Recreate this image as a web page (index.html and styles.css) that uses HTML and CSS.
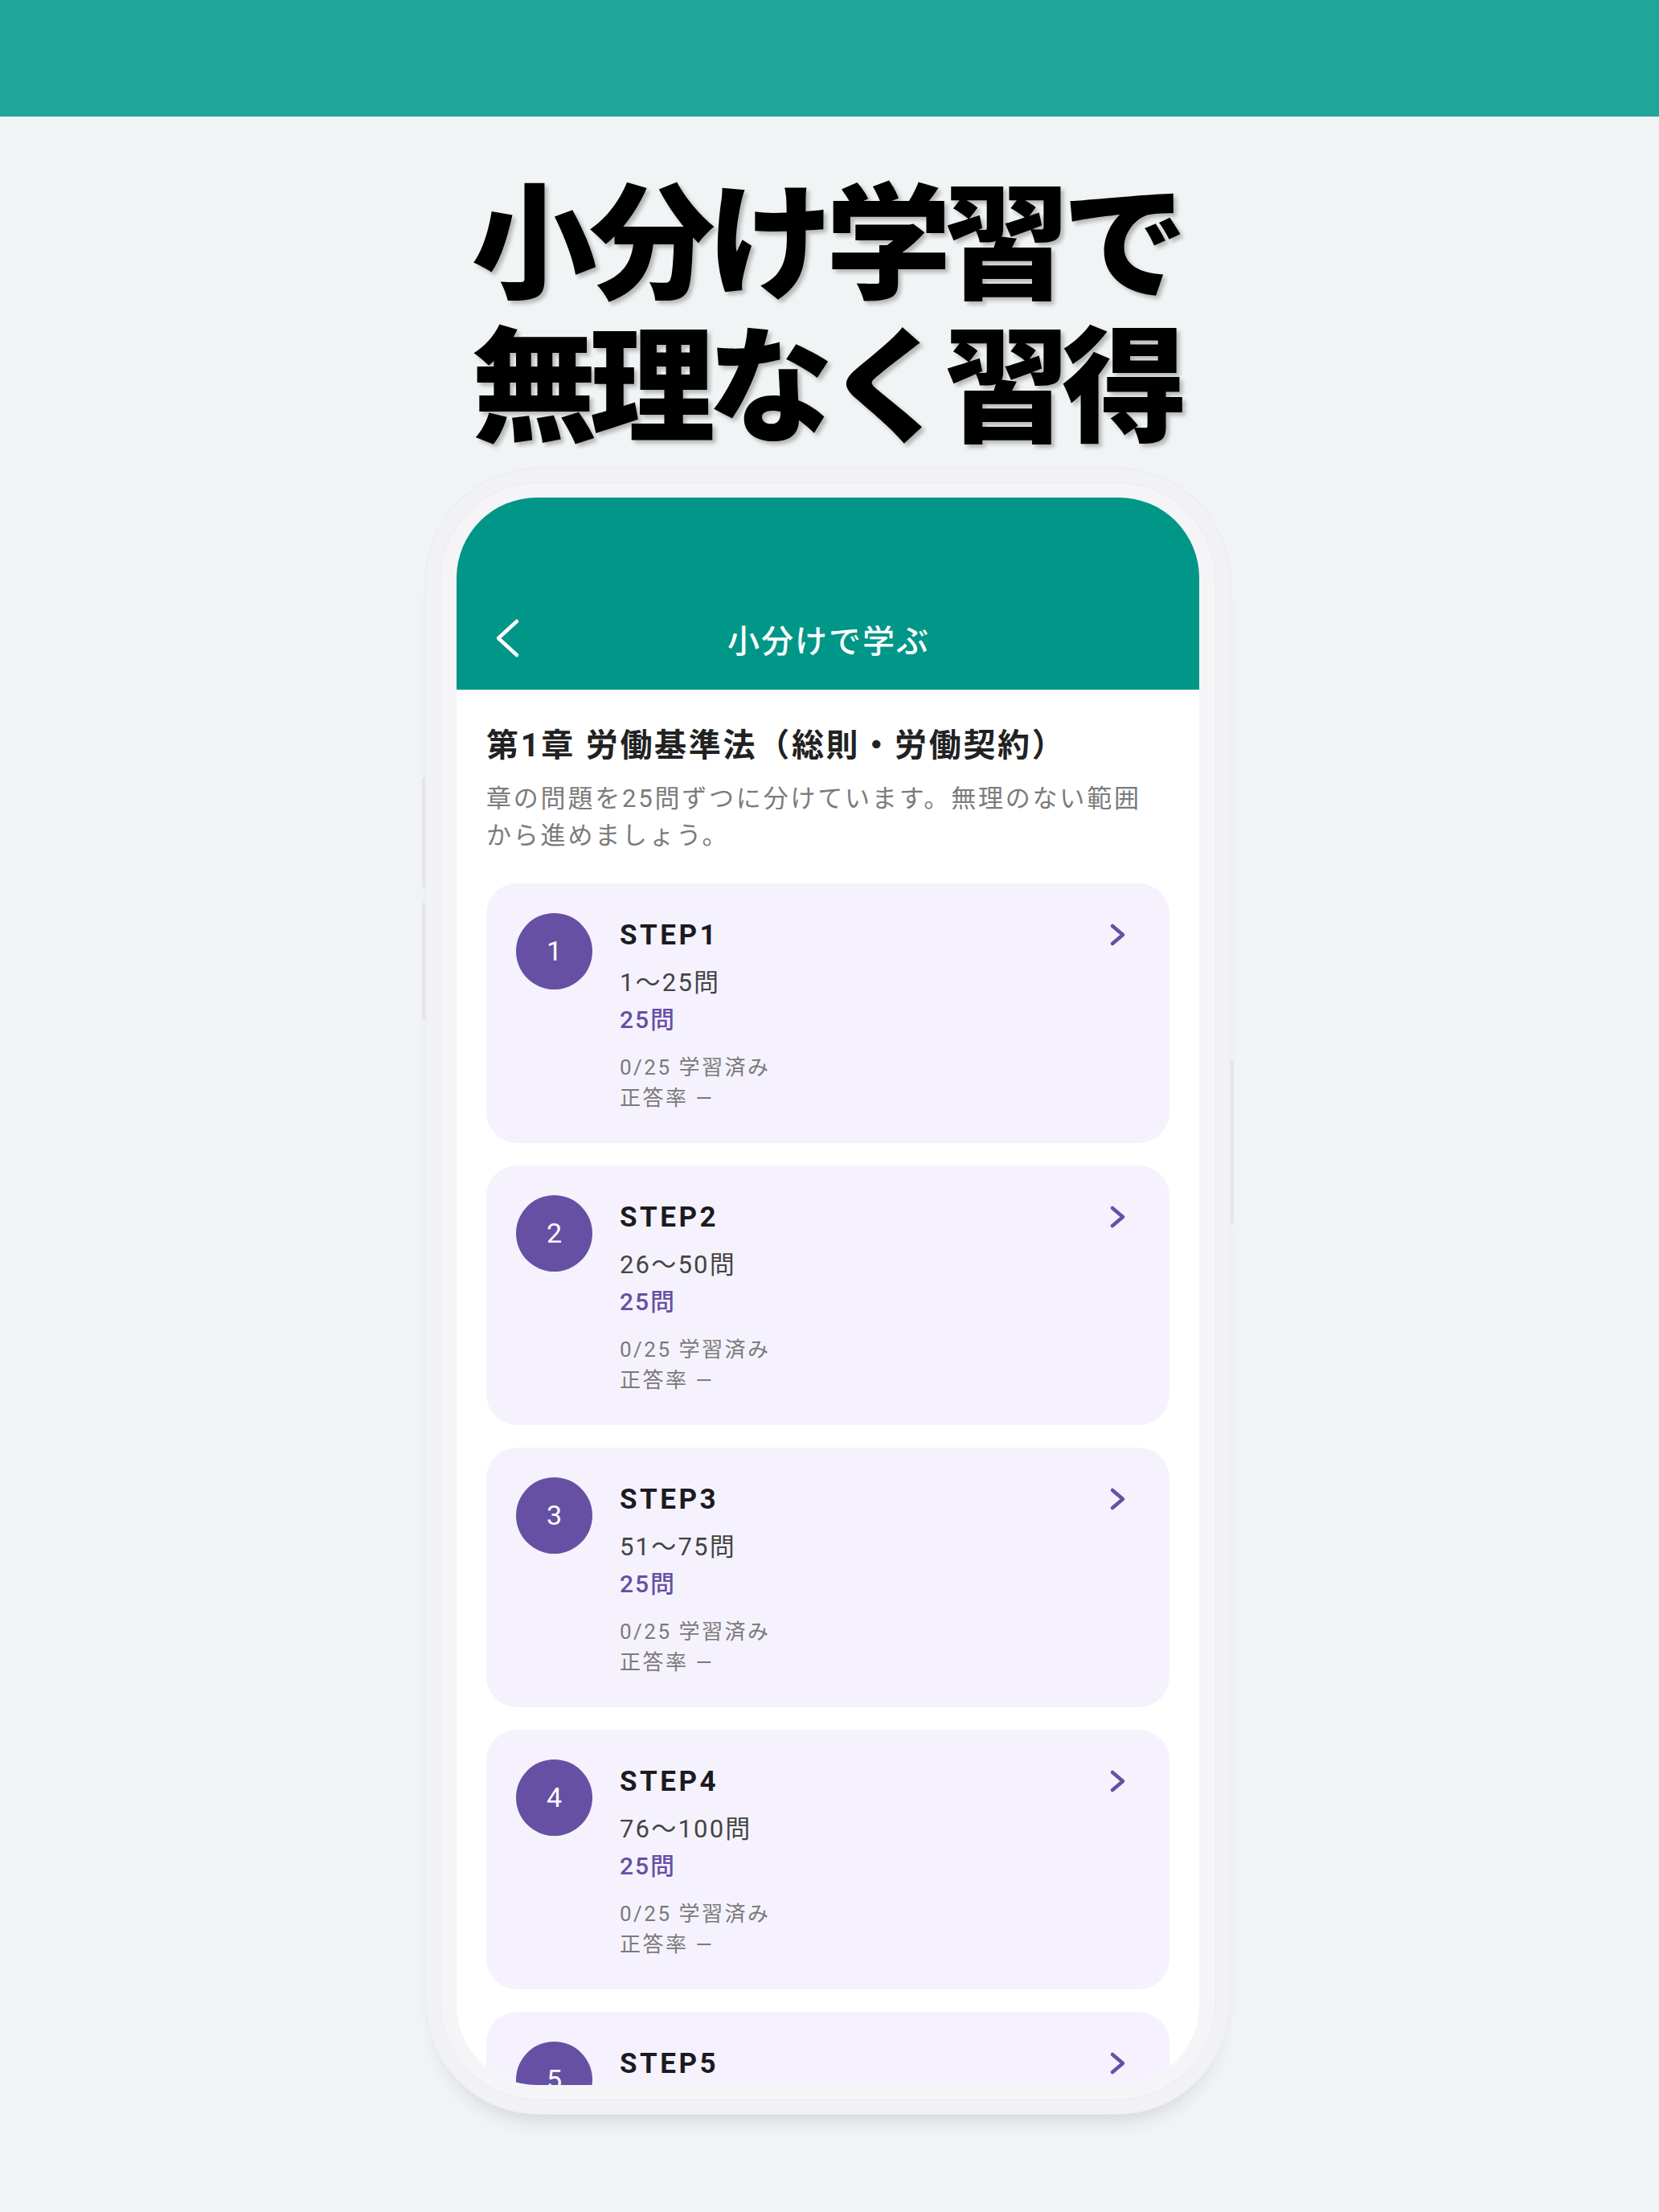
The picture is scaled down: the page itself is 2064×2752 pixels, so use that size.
FILE: index.html
```html
<!DOCTYPE html>
<html lang="ja">
<head>
  <meta charset="UTF-8" />
  <meta name="viewport" content="width=device-width, initial-scale=1.0"/>
  <title>小分け学習で無理なく習得</title>

  <!-- Page styles -->
  <link rel="stylesheet" href="styles.css">
</head>
<body>

  <!-- Top colour band -->
  <div class="top-band"></div>

  <!-- Catch copy -->
  <h1 class="headline">小分け学習で<br>無理なく習得</h1>

  <!-- Phone mockup -->
  <div class="phone">
    <span class="side-btn btn-l1"></span>
    <span class="side-btn btn-l2"></span>
    <span class="side-btn btn-r1"></span>

    <div class="bezel">
      <div class="screen">

        <!-- App bar -->
        <header class="app-bar">
          <svg class="back" viewBox="0 0 48 60" width="48" height="60">
            <polyline points="35,8 12,29 35,50" fill="none" stroke="#fff" stroke-width="4.5" stroke-linecap="round" stroke-linejoin="round"/>
          </svg>
          <h2 class="app-title">小分けで学ぶ</h2>
          <span></span>
        </header>

        <!-- Chapter info + step list -->
        <main class="content">
          <h3 class="chapter">第1章 労働基準法（総則・労働契約）</h3>
          <p class="lead">章の問題を25問ずつに分けています。無理のない範囲から進めましょう。</p>

          <div class="steps">
            <div class="step">
              <div class="badge">1</div>
              <div class="step-body">
                <div class="step-name">STEP1</div>
                <div class="step-range">1〜25問</div>
                <div class="step-count">25問</div>
                <div class="step-meta">0/25 学習済み</div>
                <div class="step-meta">正答率 —</div>
              </div>
              <svg class="arrow" viewBox="0 0 24 32" width="24" height="32">
                <polyline points="6,5 19,16 6,27" fill="none" stroke="#6650a4" stroke-width="4.5" stroke-linecap="round" stroke-linejoin="round"/>
              </svg>
            </div>

            <div class="step">
              <div class="badge">2</div>
              <div class="step-body">
                <div class="step-name">STEP2</div>
                <div class="step-range">26〜50問</div>
                <div class="step-count">25問</div>
                <div class="step-meta">0/25 学習済み</div>
                <div class="step-meta">正答率 —</div>
              </div>
              <svg class="arrow" viewBox="0 0 24 32" width="24" height="32">
                <polyline points="6,5 19,16 6,27" fill="none" stroke="#6650a4" stroke-width="4.5" stroke-linecap="round" stroke-linejoin="round"/>
              </svg>
            </div>

            <div class="step">
              <div class="badge">3</div>
              <div class="step-body">
                <div class="step-name">STEP3</div>
                <div class="step-range">51〜75問</div>
                <div class="step-count">25問</div>
                <div class="step-meta">0/25 学習済み</div>
                <div class="step-meta">正答率 —</div>
              </div>
              <svg class="arrow" viewBox="0 0 24 32" width="24" height="32">
                <polyline points="6,5 19,16 6,27" fill="none" stroke="#6650a4" stroke-width="4.5" stroke-linecap="round" stroke-linejoin="round"/>
              </svg>
            </div>

            <div class="step">
              <div class="badge">4</div>
              <div class="step-body">
                <div class="step-name">STEP4</div>
                <div class="step-range">76〜100問</div>
                <div class="step-count">25問</div>
                <div class="step-meta">0/25 学習済み</div>
                <div class="step-meta">正答率 —</div>
              </div>
              <svg class="arrow" viewBox="0 0 24 32" width="24" height="32">
                <polyline points="6,5 19,16 6,27" fill="none" stroke="#6650a4" stroke-width="4.5" stroke-linecap="round" stroke-linejoin="round"/>
              </svg>
            </div>

            <div class="step">
              <div class="badge">5</div>
              <div class="step-body">
                <div class="step-name">STEP5</div>
                <div class="step-range">101〜125問</div>
                <div class="step-count">25問</div>
                <div class="step-meta">0/25 学習済み</div>
                <div class="step-meta">正答率 —</div>
              </div>
              <svg class="arrow" viewBox="0 0 24 32" width="24" height="32">
                <polyline points="6,5 19,16 6,27" fill="none" stroke="#6650a4" stroke-width="4.5" stroke-linecap="round" stroke-linejoin="round"/>
              </svg>
            </div>
          </div>
        </main>

      </div>
    </div>
  </div>

</body>
</html>
```

FILE: styles.css
```css
/* Page base */
body {
  margin: 0;
  width: 2064px;
  height: 2752px;
  overflow: hidden;
  background: #f0f4f5;
  font-family: Roboto, "Noto Sans CJK JP", sans-serif;
}

/* Teal band at the very top */
.top-band {
  height: 145px;
  background: #21a598;
}

/* Big catch copy */
.headline {
  margin: 57px 0 0;
  padding-right: 9px;
  font-family: "Noto Sans CJK JP", sans-serif;
  font-weight: 900;
  font-size: 156px;
  line-height: 178px;
  letter-spacing: -9px;
  text-align: center;
  color: #000;
  text-shadow: 4px 4px 5px rgba(0, 0, 0, 0.25);
}

/* Phone frame */
.phone {
  position: relative;
  width: 1000px;
  margin: 25px 0 0 530px;
  padding: 18px;
  box-sizing: border-box;
  border-radius: 140px;
  background: #f2f2f5;
  box-shadow: 0 0 0 1px #eaeaee, 0 22px 24px -14px rgba(0, 0, 0, 0.12);
}

.bezel {
  padding: 18px 20px;
  border-radius: 122px;
  background: #f5f5f7;
  box-shadow: 0 0 0 1px #ececf0;
}

/* Little hardware buttons on the frame edges */
.side-btn {
  position: absolute;
  width: 4px;
  background: #e4e4e9;
  border-radius: 2px;
}
.btn-l1 { left: -5px; top: 384px; height: 137px; }
.btn-l2 { left: -5px; top: 540px; height: 146px; }
.btn-r1 { right: -5px; top: 735px; height: 204px; }

/* Screen */
.screen {
  height: 1975px;
  overflow: hidden;
  border-radius: 100px;
  background: #fff;
}

/* App bar */
.app-bar {
  height: 239px;
  box-sizing: border-box;
  padding: 0 40px 33px;
  display: grid;
  grid-template-columns: 1fr auto 1fr;
  align-items: end;
  background: #009688;
}

.back {
  display: block;
}

.app-title {
  margin: 0;
  height: 60px;
  line-height: 60px;
  font-family: "Noto Sans CJK JP", sans-serif;
  font-weight: 500;
  font-size: 40px;
  letter-spacing: 2px;
  text-indent: 2px;
  color: #fff;
}

/* Content */
.content {
  padding: 42px 37px 0;
}

.chapter {
  margin: 0;
  font-weight: 700;
  font-size: 40px;
  line-height: 56px;
  letter-spacing: 2.7px;
  color: #222;
}

.lead {
  margin: 15px 0 0;
  padding-right: 30px;
  font-size: 31px;
  line-height: 46px;
  letter-spacing: 2.8px;
  color: #7b7b7b;
}

/* Step cards */
.steps {
  margin-top: 36px;
  display: flex;
  flex-direction: column;
  gap: 28px;
}

.step {
  display: flex;
  align-items: flex-start;
  height: 323px;
  box-sizing: border-box;
  padding: 37px;
  border-radius: 38px;
  background: #f5f2fd;
}

.badge {
  flex: none;
  width: 95px;
  height: 95px;
  border-radius: 50%;
  background: #6650a4;
  color: #fff;
  font-size: 34px;
  line-height: 95px;
  text-align: center;
}

.step-body {
  margin-left: 34px;
  padding-top: 6px;
}

.step-name {
  font-weight: 700;
  font-size: 35px;
  line-height: 44px;
  letter-spacing: 3.5px;
  color: #1c1b1f;
}

.step-range {
  margin-top: 17px;
  font-size: 31px;
  line-height: 40px;
  letter-spacing: 2.2px;
  color: #444;
}

.step-count {
  margin-top: 6px;
  font-weight: 500;
  font-size: 30px;
  line-height: 40px;
  letter-spacing: 2px;
  color: #6650a4;
}

.step-meta {
  font-size: 26px;
  line-height: 38px;
  letter-spacing: 2.5px;
  color: #7a7a7a;
}

.step-count + .step-meta {
  margin-top: 20px;
}

.arrow {
  flex: none;
  margin: 11px 16px 0 auto;
}
```
